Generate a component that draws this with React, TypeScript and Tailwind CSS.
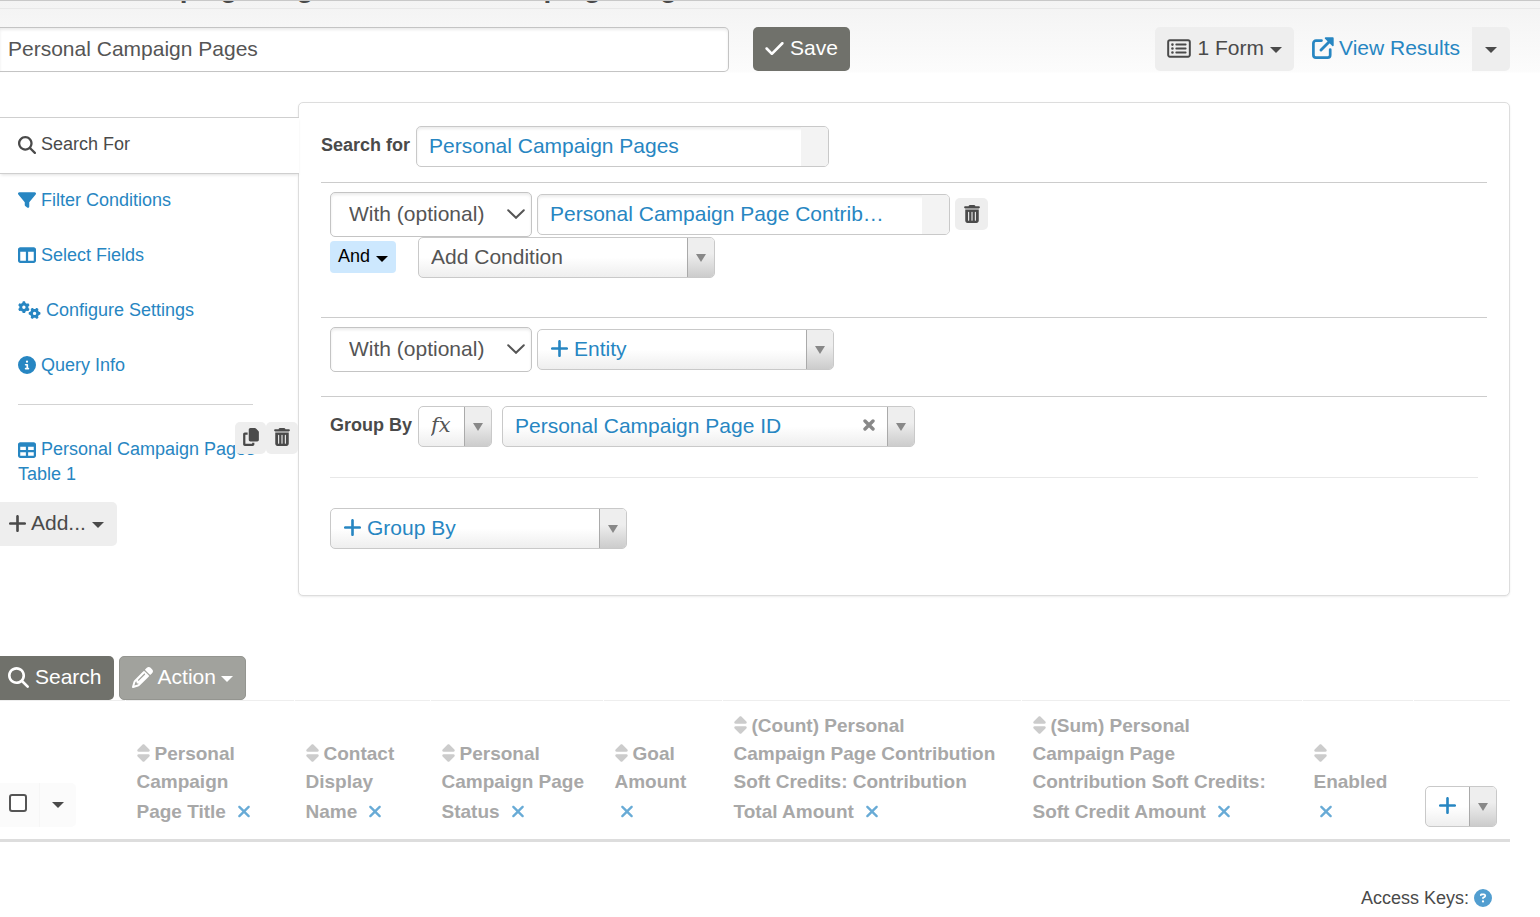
import { useState, type ReactNode } from "react";
import { clsx } from "clsx";
import type { IconType } from "react-icons";
import {
  FaCheck,
  FaCircleInfo,
  FaCircleQuestion,
  FaCopy,
  FaFilter,
  FaGears,
  FaMagnifyingGlass,
  FaPencil,
  FaPlus,
  FaRegRectangleList,
  FaSort,
  FaTable,
  FaTableColumns,
  FaTrashCan,
  FaXmark,
} from "react-icons/fa6";

const navItems: { label: string; icon: IconType; iconClass: string }[] = [
  { label: "Filter Conditions", icon: FaFilter, iconClass: "size-[18px]" },
  { label: "Select Fields", icon: FaTableColumns, iconClass: "size-[18px]" },
  { label: "Configure Settings", icon: FaGears, iconClass: "h-[18px] w-[23px]" },
  { label: "Query Info", icon: FaCircleInfo, iconClass: "size-[18px]" },
];

// Each heading is broken into fixed lines, the remove button follows the last one
const columns: { width: string; lines: string[] }[] = [
  { width: "w-[169px]", lines: ["Personal", "Campaign", "Page Title"] },
  { width: "w-[136px]", lines: ["Contact", "Display", "Name"] },
  { width: "w-[173px]", lines: ["Personal", "Campaign Page", "Status"] },
  { width: "w-[119px]", lines: ["Goal", "Amount", ""] },
  {
    width: "w-[299px]",
    lines: [
      "(Count) Personal",
      "Campaign Page Contribution",
      "Soft Credits: Contribution",
      "Total Amount",
    ],
  },
  {
    width: "w-[281px]",
    lines: [
      "(Sum) Personal",
      "Campaign Page",
      "Contribution Soft Credits:",
      "Soft Credit Amount",
    ],
  },
  { width: "w-[111px]", lines: ["", "Enabled", ""] },
];

function Caret() {
  return (
    <svg viewBox="0 0 12 6" className="mt-1 h-1.5 w-3 shrink-0" aria-hidden="true">
      <path d="M0 0h12L6 6z" fill="currentColor" />
    </svg>
  );
}

function ExternalIcon() {
  return (
    <svg viewBox="0 0 22 22" className="size-[22px] shrink-0" aria-hidden="true">
      <path
        d="M9.5 3.6H4A2.6 2.6 0 0 0 1.4 6.2V18A2.6 2.6 0 0 0 4 20.6h11.6a2.6 2.6 0 0 0 2.6-2.6v-5.5"
        fill="none"
        stroke="currentColor"
        strokeWidth="2.7"
        strokeLinecap="round"
      />
      <path d="M9 13L17.5 4.5" stroke="currentColor" strokeWidth="2.9" strokeLinecap="round" />
      <path d="M13.6.3h7.2c.5 0 .9.4.9.9v7.2c0 .8-.9 1.1-1.4.6l-7.3-7.3C12.500 1.200 12.800.3 13.600.3z" fill="currentColor" />
    </svg>
  );
}

interface ComboProps {
  label: string;
  value: string;
  className: string;
  textClassName?: string;
  icon?: ReactNode;
  locked?: boolean;
  clearable?: boolean;
}

function Combo({
  label,
  value,
  className,
  textClassName = "text-[21px] text-[#2786c2]",
  icon,
  locked,
  clearable,
}: ComboProps) {
  return (
    <div
      className={clsx(
        "flex h-[41px] shrink-0 overflow-hidden rounded-[5px] border border-[#c9c9c9] pl-3",
        locked
          ? "bg-white shadow-[inset_0_2px_3px_rgba(0,0,0,0.08)]"
          : "bg-[linear-gradient(to_bottom,#fff_50%,#eee)]",
        className
      )}
    >
      {icon && (
        <span className="flex shrink-0 items-center pr-[5px] pb-0.5 text-[#2786c2]">
          {icon}
        </span>
      )}
      <select
        aria-label={label}
        className={clsx(
          "min-w-0 flex-1 appearance-none bg-transparent pb-0.5 outline-none",
          textClassName
        )}
      >
        <option>{value}</option>
      </select>
      {clearable && (
        <button aria-label={`Clear ${label}`} className="pr-3 pb-1 text-[#888]">
          <svg viewBox="0 0 12 12" className="size-3" aria-hidden="true">
            <path
              d="M2 2l8 8M10 2l-8 8"
              stroke="currentColor"
              strokeWidth="3.4"
              strokeLinecap="round"
            />
          </svg>
        </button>
      )}
      <span
        className={clsx(
          "pointer-events-none flex w-[27px] shrink-0 items-center justify-center text-[#888]",
          locked
            ? "bg-[#f3f3f3]"
            : "border-l border-[#aaa] bg-[linear-gradient(to_bottom,#eee_40%,#ccc)]"
        )}
      >
        {!locked && (
          <svg viewBox="0 0 10 8" className="h-2 w-2.5" aria-hidden="true">
            <path d="M0 0h10L5 8z" fill="currentColor" />
          </svg>
        )}
      </span>
    </div>
  );
}

function JoinSelect({ label }: { label: string }) {
  return (
    <div className="relative w-[202px] shrink-0 text-[#555]">
      <select
        aria-label={label}
        className="h-[45px] w-full appearance-none rounded-[5px] border border-[#c4c4c4] bg-white pb-0.5 pl-[18px] text-[21px] shadow-[inset_0_2px_3px_rgba(0,0,0,0.08)]"
      >
        <option>With (optional)</option>
        <option>With (required)</option>
        <option>Without</option>
      </select>
      <svg
        viewBox="0 0 18 10"
        className="pointer-events-none absolute top-[17px] right-[7px] h-2.5 w-[18px]"
        aria-hidden="true"
      >
        <path
          d="M1.2 1.2L9 8.8l7.800-7.600"
          fill="none"
          stroke="currentColor"
          strokeWidth="2"
          strokeLinecap="round"
        />
      </svg>
    </div>
  );
}

function Toolbar() {
  const [title, setTitle] = useState("Personal Campaign Pages");

  return (
    <div className="grid grid-cols-[729fr_781fr] pt-[18px] pr-[30px]">
      <input
        aria-label="Search title"
        value={title}
        onChange={(e) => setTitle(e.target.value)}
        className="h-[45px] min-w-0 rounded-r-[5px] border border-l-0 border-[#c4c4c4] bg-white px-2 pb-0.5 text-[21px] text-[#555] shadow-[inset_0_2px_3px_rgba(0,0,0,0.08)]"
      />
      <div className="flex h-11 justify-between pl-6 text-[21px]">
        <button className="flex items-center gap-1.5 rounded-[5px] bg-[#70716b] px-3 pb-0.5 text-white">
          <FaCheck className="h-[21px] w-[19px]" />
          Save
        </button>
        <div className="flex">
          <button className="flex items-center gap-1.5 rounded-[5px] bg-[#eee] px-3 pb-0.5">
            <FaRegRectangleList className="h-[21px] w-6" />
            1 Form
            <Caret />
          </button>
          <a
            href="#results"
            className="flex items-center gap-[5px] pr-3 pb-0.5 pl-[18px] text-[#2786c2]"
          >
            <ExternalIcon />
            View Results
          </a>
          <button
            aria-label="More result options"
            className="flex w-[38px] items-center justify-center rounded-r-[5px] bg-[#eee] pb-0.5"
          >
            <Caret />
          </button>
        </div>
      </div>
    </div>
  );
}

function Sidebar() {
  return (
    <nav className="relative z-10 -mr-px w-[299px] shrink-0 pt-[15px]">
      <a
        href="#search-for"
        className="flex h-[57px] items-center gap-[5px] border-y border-[#cfcfcf] bg-white pb-0.5 pl-[18px] shadow-[0_2px_3px_-1px_rgba(0,0,0,0.12)]"
      >
        <FaMagnifyingGlass className="size-[18px]" />
        Search For
      </a>
      <div className="mr-px flex flex-col gap-px text-[#2786c2]">
        {navItems.map(({ label, icon: Icon, iconClass }) => (
          <a
            key={label}
            href="#"
            className="flex h-[54px] items-center gap-[5px] pb-0.5 pl-[18px]"
          >
            <Icon className={iconClass} />
            {label}
          </a>
        ))}
      </div>
      <hr className="mt-[11px] mr-[46px] ml-[18px] border-[#d3d3d3]" />
      <div className="relative mr-px pt-8 pr-6 pb-[15px] pl-[18px] leading-[25px]">
        <a href="#table-1" className="block text-[#2786c2]">
          <span className="flex items-center gap-[5px] whitespace-nowrap">
            <FaTable className="size-[18px]" />
            Personal Campaign Pages
          </span>
          Table 1
        </a>
        <div className="absolute top-[17px] right-0 flex">
          <button
            aria-label="Clone display"
            className="flex h-8 w-[31px] items-center justify-center rounded-[5px] bg-[#eee] pb-0.5"
          >
            <FaCopy className="size-[18px]" />
          </button>
          <button
            aria-label="Delete display"
            className="flex h-8 w-8 items-center justify-center rounded-[5px] bg-[#eee] pb-0.5"
          >
            <FaTrashCan className="size-[18px]" />
          </button>
        </div>
      </div>
      <button className="flex h-11 items-center gap-1 rounded-r-[5px] bg-[#eee] pr-[13px] pb-0.5 pl-2 text-[21px]">
        <FaPlus className="h-[21px] w-[19px]" />
        Add...
        <span className="pl-0.5">
          <Caret />
        </span>
      </button>
    </nav>
  );
}

function QueryPanel() {
  return (
    <section className="min-w-0 flex-1 rounded-[5px] border border-[#ddd] bg-white px-[22px] pt-[23px] pb-[46px] shadow-[0_1px_2px_rgba(0,0,0,0.08)]">
      <div className="flex items-center gap-1.5 pb-[15px]">
        <span className="pb-0.5 font-bold">Search for</span>
        <Combo
          label="Search for"
          value="Personal Campaign Pages"
          className="w-[413px]"
          locked
        />
      </div>

      <div className="border-t border-[#ccc] px-[9px] pt-[9px] pb-[39px]">
        <div className="flex items-center gap-[5px]">
          <JoinSelect label="First join type" />
          <Combo
            label="Joined entity"
            value="Personal Campaign Page Contrib…"
            className="w-[413px]"
            locked
          />
          <button
            aria-label="Remove join"
            className="mb-0.5 flex h-8 w-[33px] items-center justify-center rounded-[5px] bg-[#eee]"
          >
            <FaTrashCan className="size-[18px]" />
          </button>
        </div>
        <div className="flex items-center">
          <button className="mr-[22px] mb-0.5 flex h-8 items-center gap-1.5 rounded-[4px] bg-[#cde8fe] px-2 text-black">
            And
            <Caret />
          </button>
          <Combo
            label="Add condition"
            value="Add Condition"
            className="w-[297px]"
            textClassName="text-[21px] text-[#555]"
          />
        </div>
      </div>

      <div className="border-t border-[#ccc] px-[9px] pt-[9px] pb-6">
        <div className="flex items-center gap-[5px]">
          <JoinSelect label="Second join type" />
          <Combo
            label="Add entity"
            value="Entity"
            className="w-[297px]"
            icon={<FaPlus className="h-[21px] w-[19px]" />}
          />
        </div>
      </div>

      <div className="border-t border-[#ccc] px-[9px] pt-[9px]">
        <div className="flex items-center gap-1.5 pb-[30px]">
          <span className="pb-0.5 font-bold">Group By</span>
          <Combo
            label="Field function"
            value="fx"
            className="w-[74px]"
            textClassName="font-['DejaVu_Serif',serif] text-[21px] italic text-[#555]"
          />
          <div className="pl-1">
            <Combo
              label="Group by field"
              value="Personal Campaign Page ID"
              className="w-[413px]"
              clearable
            />
          </div>
        </div>
        <div className="border-t border-[#e8e8e8] pt-[30px]">
          <Combo
            label="Add group by"
            value="Group By"
            className="w-[297px]"
            icon={<FaPlus className="h-[21px] w-[19px]" />}
          />
        </div>
      </div>
    </section>
  );
}

function ResultsTable() {
  return (
    <section className="pt-[60px] pr-[30px]">
      <div className="flex h-11 gap-[5px] text-[21px] text-white">
        <button className="flex items-center gap-1.5 rounded-r-[5px] bg-[#70716b] pr-3 pb-0.5 pl-2">
          <FaMagnifyingGlass className="size-[21px]" />
          Search
        </button>
        <button
          disabled
          className="flex items-center gap-[5px] rounded-[5px] border border-[#949590] bg-[#a1a29d] px-3 pb-0.5"
        >
          <FaPencil className="size-[21px]" />
          Action
          <Caret />
        </button>
      </div>
      <div className="border-b-[3px] border-[#ddd]">
        <table className="w-full table-fixed text-left text-[19px] leading-7 text-[#a8a8a8]">
          <thead>
            <tr className="align-bottom">
              <th className="w-[125px] border-t border-r border-t-[#eee] border-r-white pb-3">
                <div className="flex h-11 w-[76px]">
                  <label className="flex flex-1 items-center bg-[#fbfbfb] pr-3 pb-1 pl-[9px]">
                    <input
                      type="checkbox"
                      aria-label="Select all rows"
                      className="size-[18px] appearance-none rounded-[3px] border-2 border-[#555] bg-white checked:bg-[#555]"
                    />
                  </label>
                  <button
                    aria-label="Selection options"
                    className="flex w-[37px] items-center justify-center rounded-r-[5px] border-l border-[#f6f6f6] bg-[#fbfbfb] pb-1 text-[#4a4a4a]"
                  >
                    <Caret />
                  </button>
                </div>
              </th>
              {columns.map(({ width, lines }) => (
                <th
                  key={lines.join(" ")}
                  className={clsx(
                    width,
                    "border-t border-r border-t-[#eee] border-r-white pt-[11px] pb-[11px] pl-[11px] whitespace-nowrap"
                  )}
                >
                  {lines.map((line, i) => {
                    const isLast = i === lines.length - 1;
                    return (
                      <span
                        key={i}
                        className={clsx("flex items-center", isLast ? "h-8" : "h-7")}
                      >
                        {i === 0 && (
                          <FaSort className="mr-[5px] mb-0.5 h-5 w-[13px] text-[#ccc]" />
                        )}
                        {line}
                        {isLast && (
                          <button
                            aria-label="Remove column"
                            className={clsx(
                              "pb-0.5 text-[#68abd6]",
                              line ? "pl-[11px]" : "pl-[5px]"
                            )}
                          >
                            <FaXmark className="h-[19px] w-[14px]" />
                          </button>
                        )}
                      </span>
                    );
                  })}
                </th>
              ))}
              <th className="w-[97px] border-t border-[#eee] pb-3 pl-[11px]">
                <Combo
                  label="Add column"
                  value=""
                  className="w-[72px]"
                  icon={<FaPlus className="h-[21px] w-[19px]" />}
                />
              </th>
            </tr>
          </thead>
        </table>
      </div>
    </section>
  );
}

export default function App() {
  return (
    <div className="bg-[linear-gradient(to_bottom,#f3f3f3,#fcfcfc_72px,#fff_73px)] font-['Liberation_Sans',Arial,sans-serif] text-[18px] text-[#4a4a4a]">
      <header className="flex h-[9px] items-end overflow-hidden border-t border-b border-t-[#c8c8c8] border-b-[#e8e8e8] pb-1.5">
        <h1 className="-ml-[7px] flex gap-3 text-[28px] leading-none font-bold whitespace-nowrap">
          <span>Personal Campaign Pages</span>
          <span>Personal Campaign Pages</span>
        </h1>
      </header>
      <Toolbar />
      <main>
        <div className="flex items-start pt-[30px] pr-[30px]">
          <Sidebar />
          <QueryPanel />
        </div>
        <ResultsTable />
      </main>
      <footer className="flex items-center justify-end gap-[5px] pt-[42px] pr-12 leading-7">
        Access Keys:
        <a href="#access-keys" aria-label="Access key help" className="text-[#529ed0]">
          <FaCircleQuestion className="size-[18px]" />
        </a>
      </footer>
    </div>
  );
}
